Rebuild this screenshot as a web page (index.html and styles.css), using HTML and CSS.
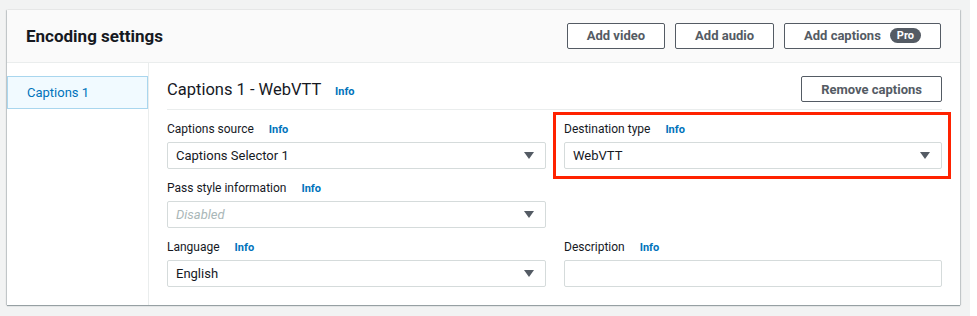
FILE: index.html
```html
<!DOCTYPE html>
<html lang="en">
<head>
    <meta charset="UTF-8">
    <title>Encoding settings</title>
    <link rel="stylesheet" href="styles.css">
</head>
<body>
    <div class="page">
        <div class="card">
            <div class="card-header">
                <h2>Encoding settings</h2>
                <div class="actions">
                    <button class="btn">Add video</button>
                    <button class="btn">Add audio</button>
                    <button class="btn">Add captions <span class="badge">Pro</span></button>
                </div>
            </div>

            <div class="card-body">
                <div class="sidebar">
                    <div class="tab active">Captions 1</div>
                </div>

                <div class="content">
                    <div class="content-head">
                        <h3>Captions 1 - WebVTT <a class="info" href="#">Info</a></h3>
                        <button class="btn">Remove captions</button>
                    </div>

                    <div class="fields">
                        <div class="field">
                            <div class="label">Captions source <a class="info" href="#">Info</a></div>
                            <div class="select">Captions Selector 1<span class="arrow"></span></div>
                        </div>
                        <div class="field highlight">
                            <div class="label">Destination type <a class="info" href="#">Info</a></div>
                            <div class="select">WebVTT<span class="arrow"></span></div>
                        </div>
                        <div class="field">
                            <div class="label">Pass style information <a class="info" href="#">Info</a></div>
                            <div class="select disabled">Disabled<span class="arrow"></span></div>
                        </div>
                        <div class="field"></div>
                        <div class="field">
                            <div class="label">Language <a class="info" href="#">Info</a></div>
                            <div class="select">English<span class="arrow"></span></div>
                        </div>
                        <div class="field">
                            <div class="label">Description <a class="info" href="#">Info</a></div>
                            <div class="input"></div>
                        </div>
                    </div>
                </div>
            </div>
        </div>
    </div>
</body>
</html>
```

FILE: styles.css
```css
body {
    margin: 0;
    background-color: #ffffff;
    font-family: 'Roboto', sans-serif;
    color: #16191f;
}

.page {
    width: 970px;
    height: 316px;
    box-sizing: border-box;
    padding: 10px 0 0 7px;
    background-color: #f2f3f3; /* console grey */
}

.card {
    width: 953px;
    background: #ffffff;
    box-shadow: 0 1px 1px 0 rgba(0, 28, 36, 0.35), 1px 0 1px 0 rgba(0, 28, 36, 0.15), -1px 0 1px 0 rgba(0, 28, 36, 0.15);
}

.card-header {
    height: 53px;
    box-sizing: border-box;
    display: flex;
    align-items: center;
    justify-content: space-between;
    padding: 0 19px 0 19px;
    background: #fafafa;
    border-bottom: 1px solid #eaeded;
}

h2 {
    margin: 0;
    font-size: 17px;
    font-weight: 700;
}

.actions {
    display: flex;
    gap: 10px;
    margin-top: -1px;
}

/* buttons */
.btn {
    height: 26px;
    padding: 0 19px;
    display: inline-flex;
    align-items: center;
    gap: 9px;
    font-family: inherit;
    font-size: 13px;
    font-weight: 700;
    color: #545b64;
    background: #ffffff;
    border: 1px solid #545b64;
    border-radius: 2px;
}

.badge {
    display: inline-block;
    height: 15px;
    line-height: 15px;
    padding: 0 7px;
    border-radius: 8px;
    background: #545b64;
    color: #ffffff;
    font-size: 11px;
}

.card-body {
    display: flex;
}

.sidebar {
    width: 141px;
    flex-shrink: 0;
    padding-top: 13px;
    border-right: 1px solid #eaeded;
}

.tab {
    height: 33px;
    box-sizing: border-box;
    display: flex;
    align-items: center;
    padding-left: 19px;
    font-size: 13px;
    color: #0073bb;
}

.tab.active {
    background: #f1faff;
    border: 1px solid #a9d6ee;
}

.content {
    flex: 1;
    padding: 13px 18px 18px 18px;
}

.content-head {
    display: flex;
    align-items: center;
    justify-content: space-between;
    padding-bottom: 7px;
    border-bottom: 1px solid #eaeded;
}

h3 {
    margin: 0;
    font-size: 16.5px;
    font-weight: 400;
}

.info {
    margin-left: 10px;
    font-size: 11px;
    font-weight: 700;
    color: #0073bb;
    text-decoration: none;
}

.fields {
    display: grid;
    grid-template-columns: 379px 378px;
    column-gap: 18px;
    row-gap: 9px;
    padding-top: 9px;
}

.field {
    position: relative;
}

.label {
    height: 20px;
    line-height: 20px;
    font-size: 12px;
    margin-bottom: 3px;
}

.label .info {
    margin-left: 12px;
}

.select,
.input {
    height: 27px;
    box-sizing: border-box;
    display: flex;
    align-items: center;
    justify-content: space-between;
    padding: 0 11px 0 8px;
    font-size: 13px;
    border: 1px solid #d5dbdb;
    border-radius: 2px;
    background: #ffffff;
}

.select.disabled {
    color: #aab7b8;
    font-style: italic;
}

.arrow {
    width: 0;
    height: 0;
    border-left: 5px solid transparent;
    border-right: 5px solid transparent;
    border-top: 7px solid #545b64;
}

/* red annotation box drawn over the field */
.highlight::after {
    content: "";
    position: absolute;
    top: -7px;
    left: -11px;
    right: -9px;
    bottom: -10px;
    border: 3px solid #ff2200;
}
```
